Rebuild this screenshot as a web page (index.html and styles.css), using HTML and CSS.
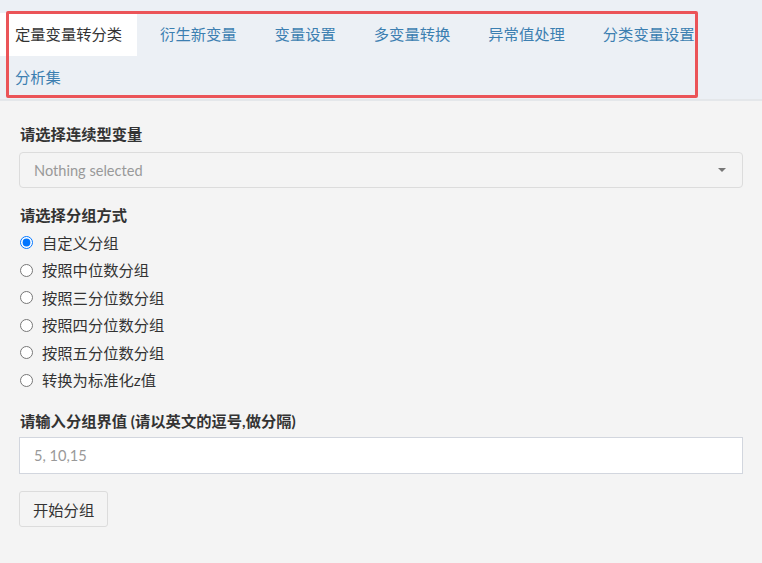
FILE: index.html
```html
<!DOCTYPE html>
<html lang="zh-CN">
<head>
  <meta charset="UTF-8" />
  <meta name="viewport" content="width=device-width, initial-scale=1.0" />
  <title>定量变量转分类</title>
  <link rel="stylesheet" href="styles.css">
</head>
<body>
  <div class="tab-bar">
    <ul class="tabs">
      <li class="active"><a href="#">定量变量转分类</a></li>
      <li><a href="#">衍生新变量</a></li>
      <li><a href="#">变量设置</a></li>
      <li><a href="#">多变量转换</a></li>
      <li><a href="#">异常值处理</a></li>
      <li><a href="#">分类变量设置</a></li>
      <li><a href="#">分析集</a></li>
    </ul>
    <div class="highlight"></div>
  </div>

  <div class="content">
    <label class="field-label">请选择连续型变量</label>
    <div class="select-box">
      <span class="placeholder">Nothing selected</span>
      <span class="caret"></span>
    </div>

    <label class="field-label gap">请选择分组方式</label>
    <div class="radios">
      <label class="radio"><input type="radio" name="group" checked /> <span>自定义分组</span></label>
      <label class="radio"><input type="radio" name="group" /> <span>按照中位数分组</span></label>
      <label class="radio"><input type="radio" name="group" /> <span>按照三分位数分组</span></label>
      <label class="radio"><input type="radio" name="group" /> <span>按照四分位数分组</span></label>
      <label class="radio"><input type="radio" name="group" /> <span>按照五分位数分组</span></label>
      <label class="radio"><input type="radio" name="group" /> <span>转换为标准化z值</span></label>
    </div>

    <label class="field-label gap" for="cuts">请输入分组界值 (请以英文的逗号,做分隔)</label>
    <input class="text-input" type="text" id="cuts" placeholder="5, 10,15" />

    <button class="btn">开始分组</button>
  </div>
</body>
</html>
```

FILE: styles.css
```css
body {
  margin: 0;
  background: #f4f4f4;
  color: #333;
  font-family: Lato, "Noto Sans CJK SC", sans-serif;
  font-size: 15.3px;
}

.tab-bar {
  position: relative;
  background: #ecf0f5;
  padding-top: 13px;
  border-bottom: 2px solid #e4e7ea;
}
.tabs {
  list-style: none;
  margin: 0;
  padding: 0;
  display: flex;
  flex-wrap: wrap;
}
.tabs li {
  margin-right: 8px;
}
.tabs a {
  display: block;
  padding: 0 15px;
  height: 43px;
  line-height: 42px;
  color: #3c7fb1;
  text-decoration: none;
}
.tabs li.active a {
  background: #fff;
  color: #333;
}
.highlight {
  position: absolute;
  left: 6px;
  top: 11px;
  width: 686px;
  height: 81px;
  border: 3px solid #eb5458;
  border-radius: 2px;
  pointer-events: none;
}

.content {
  padding: 23px 19px 30px 19px;
}
.field-label {
  display: block;
  font-weight: bold;
  line-height: 20px;
  margin-bottom: 8px;
  padding-left: 1px;
}
.field-label.gap {
  margin-top: 17px;
  margin-bottom: 4px;
}
.select-box {
  display: flex;
  align-items: center;
  justify-content: space-between;
  height: 34px;
  border: 1px solid #dcdcdc;
  border-radius: 4px;
  background: #f4f4f4;
  padding: 0 16px 0 14px;
}
.placeholder {
  color: #999;
  font-size: 14.6px;
}
.caret {
  width: 0;
  height: 0;
  border-left: 4px solid transparent;
  border-right: 4px solid transparent;
  border-top: 4px solid #777;
}

.radios {
  display: flex;
  flex-direction: column;
}
.radio {
  display: flex;
  align-items: center;
  height: 27.5px;
  padding-left: 1px;
}
.radio input {
  margin: 0 9px 0 0;
  width: 13px;
  height: 13px;
}
.radio span {
  line-height: 20px;
}

.text-input {
  display: block;
  width: 100%;
  box-sizing: border-box;
  height: 37px;
  margin-top: 6px;
  padding: 0 14px;
  border: 1px solid #d2d6de;
  background: #fff;
  font-family: Lato, "Noto Sans CJK SC", sans-serif;
  font-size: 14.6px;
  color: #555;
}
.text-input::placeholder {
  color: #999;
}

.btn {
  margin-top: 17px;
  height: 36px;
  padding: 0 13px;
  background: #f4f4f4;
  border: 1px solid #dcdcdc;
  border-radius: 3px;
  color: #333;
  font-family: Lato, "Noto Sans CJK SC", sans-serif;
  font-size: 15.3px;
}
```
